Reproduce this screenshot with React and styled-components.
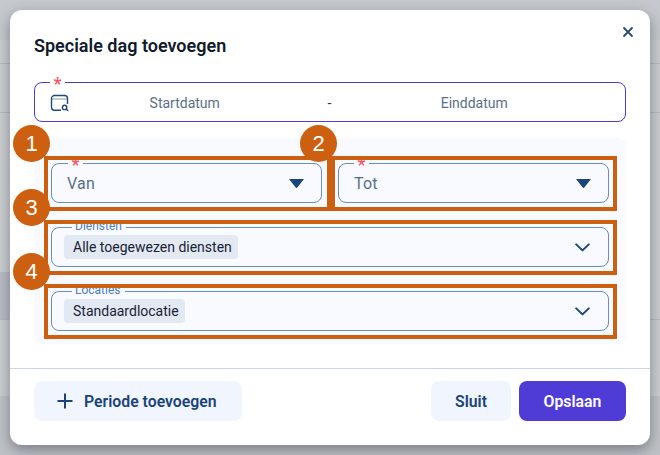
import React from 'react';
import styled, { createGlobalStyle } from 'styled-components';

const GlobalStyle = createGlobalStyle`
  html, body {
    margin: 0;
    padding: 0;
    background: #c6c9cc;
    font-family: Roboto, "Liberation Sans", sans-serif;
  }
`;

const Page = styled.div`
  position: relative;
  width: 660px;
  height: 455px;
  overflow: hidden;
  display: flex;
  flex-direction: column;
  background: #c9cbcf;
`;

const TopBand = styled.div`
  height: 40px;
  background: #c5c8cc;
`;

const BackRow = styled.div`
  height: ${props => props.$height}px;
  border-bottom: ${props => props.$line ? '1px solid #b2bac6' : '0'};
  box-sizing: border-box;
  background: #cbcdd0;
`;

const SelectedCell = styled.div`
  width: 10px;
  height: 100%;
  background: #b9bbc6;
`;

const BottomBand = styled.div`
  flex: 1;
  background: #bfc2c6;
`;

const Overlay = styled.div`
  position: absolute;
  inset: 0;
  padding: 10px;
  box-sizing: border-box;
`;

const Modal = styled.div`
  height: 435px;
  background: #fff;
  border-radius: 12px;
  box-shadow: 0 5px 14px rgba(40, 45, 60, 0.45);
  display: flex;
  flex-direction: column;
  position: relative;
`;

const Header = styled.div`
  height: 72px;
  box-sizing: border-box;
  padding: 25px 24px 0;
`;

const Title = styled.h2`
  margin: 0;
  font-size: 18px;
  line-height: 22px;
  font-weight: 600;
  color: #111b2b;
`;

const CloseButton = styled.button`
  position: absolute;
  top: 16px;
  right: 16px;
  width: 12px;
  height: 12px;
  padding: 0;
  border: 0;
  background: none;
  display: flex;
`;

const Body = styled.div`
  padding: 0 24px;
  display: flex;
  flex-direction: column;
  gap: 16px;
`;

const DateField = styled.div`
  position: relative;
  height: 40px;
  box-sizing: border-box;
  border: 1px solid #4f3bd6;
  border-radius: 8px;
  display: flex;
  align-items: center;
  padding: 1px 33px 0 15px;
  font-size: 14px;
  color: #5a6e8c;
`;

const CalendarSvg = styled.svg`
  flex-shrink: 0;
  margin-right: -2px;
`;

const DateValue = styled.div`
  flex: 1;
  text-align: center;
`;

const Dash = styled.div`
  width: 54px;
  text-align: center;
  color: #2c3a4e;
`;

const Required = styled.span`
  position: absolute;
  top: ${props => props.$top}px;
  left: ${props => props.$left}px;
  width: 15px;
  height: 8px;
  background: ${props => props.$bg};
  color: #ff5064;
  font-size: 18px;
  font-weight: 500;
  line-height: 12px;
  text-align: center;
`;

const Panel = styled.div`
  background: #f8faff;
  border-radius: 8px;
  padding: 25px 17px 13px;
  display: grid;
  grid-template-columns: 1fr 1fr;
  gap: 24px 16px;
`;

const Field = styled.div`
  position: relative;
  grid-column: ${props => props.$wide ? '1 / -1' : 'auto'};
  height: 40px;
  box-sizing: border-box;
  border: 1px solid #5f90c8;
  border-radius: 8px;
  display: flex;
  align-items: center;
  justify-content: space-between;
  padding: 0 ${props => props.$wide ? '18px' : '17px'} 0 ${props => props.$wide ? '12px' : '15px'};
`;

const Value = styled.span`
  font-size: 16px;
  letter-spacing: 0.2px;
  color: #5a6e8c;
`;

const Chip = styled.span`
  height: 24px;
  padding: 0 6px 0 9px;
  border-radius: 4px;
  background: #e3e9f3;
  font-size: 14px;
  line-height: 24px;
  color: #182333;
`;

const FieldLabel = styled.span`
  position: absolute;
  top: -8px;
  left: 20px;
  padding: 0 4px 0 3px;
  background: #f8faff;
  font-size: 12px;
  line-height: 12px;
  color: #4a7fc0;
`;

const Highlight = styled.div`
  position: absolute;
  top: -8px;
  bottom: -9px;
  left: -8px;
  right: ${props => props.$wideRight ? -10 : -9}px;
  border: 4px solid #cd5f10;
  pointer-events: none;
`;

const Footer = styled.div`
  margin-top: 24px;
  border-top: 1px solid #ccd6e6;
  padding: 12px 24px 24px;
  display: flex;
  align-items: center;
  gap: 8px;
`;

const Button = styled.button`
  height: 40px;
  width: ${props => props.$width}px;
  padding: 0;
  border: 0;
  border-radius: 8px;
  background: ${props => props.$primary ? '#4f3bd6' : '#f1f6fe'};
  color: ${props => props.$primary ? '#fff' : '#1b4478'};
  font-family: inherit;
  font-size: 15.8px;
  font-weight: 600;
  display: flex;
  align-items: center;
  justify-content: center;
  gap: 11px;
`;

const AddButton = styled(Button)`
  justify-content: flex-start;
  padding-left: 23px;
`;

const Spacer = styled.div`
  flex: 1;
`;

const Badge = styled.div`
  position: absolute;
  top: ${props => props.$top}px;
  left: ${props => props.$left}px;
  width: 37px;
  height: 37px;
  border-radius: 50%;
  background: #cd5f10;
  color: #fff;
  font-family: "Liberation Sans", sans-serif;
  font-size: 22px;
  line-height: 37px;
  text-align: center;
`;

const CalendarIcon = () => (
  <CalendarSvg width="19" height="19" viewBox="0 0 19 19" fill="none">
    <path d="M4.5 1.5v1M14.5 1.5v1" stroke="#c3ccd9" strokeWidth="1" />
    <path d="M1.5 6h15.5" stroke="#c3ccd9" strokeWidth="2" />
    <path d="M11 17.2H4.5a3 3 0 0 1-3-3V5.5a3 3 0 0 1 3-3h10a3 3 0 0 1 3 3V11" stroke="#1f4a7a" strokeWidth="1.4" />
    <circle cx="14.6" cy="14.4" r="2.2" stroke="#1f4a7a" strokeWidth="1.4" />
    <path d="M16.3 16.1l1.5 1.5" stroke="#1f4a7a" strokeWidth="1.4" strokeLinecap="round" />
  </CalendarSvg>
);

const CloseIcon = () => (
  <svg width="12" height="12" viewBox="0 0 12 12" fill="none">
    <path d="M1.5 1.5l9 9M10.5 1.5l-9 9" stroke="#254b75" strokeWidth="1.8" />
  </svg>
);

const CaretIcon = () => (
  <svg width="15" height="9" viewBox="0 0 15 9">
    <path d="M0 0h15L8.5 8.2a1.2 1.2 0 0 1-2 0z" fill="#1b4478" />
  </svg>
);

const ChevronIcon = () => (
  <svg width="15" height="9" viewBox="0 0 15 9" fill="none">
    <path d="M1.2 1.4l6.3 6 6.3-6" stroke="#1b4478" strokeWidth="2" strokeLinecap="round" strokeLinejoin="round" />
  </svg>
);

const PlusIcon = () => (
  <svg width="16" height="16" viewBox="0 0 16 16" fill="none">
    <path d="M8 .5v15M.5 8h15" stroke="#1b4478" strokeWidth="2" />
  </svg>
);

export default function App() {
  return (
    <Page>
      <GlobalStyle />
      <TopBand />
      <BackRow $height={24} $line />
      <BackRow $height={49} $line />
      <BackRow $height={159} />
      <BackRow $height={48} $line>
        <SelectedCell />
      </BackRow>
      <BackRow $height={76} />
      <BottomBand />

      <Overlay>
        <Modal>
          <CloseButton aria-label="Sluiten">
            <CloseIcon />
          </CloseButton>
          <Header>
            <Title>Speciale dag toevoegen</Title>
          </Header>
          <Body>
            <DateField>
              <Required $top={-5} $left={15} $bg="#fff">*</Required>
              <CalendarIcon />
              <DateValue>Startdatum</DateValue>
              <Dash>-</Dash>
              <DateValue>Einddatum</DateValue>
            </DateField>
            <Panel>
              <Field>
                <Required $top={-5} $left={16} $bg="#f8faff">*</Required>
                <Value>Van</Value>
                <CaretIcon />
                <Highlight $wideRight />
              </Field>
              <Field>
                <Required $top={-5} $left={15} $bg="#f8faff">*</Required>
                <Value>Tot</Value>
                <CaretIcon />
                <Highlight />
              </Field>
              <Field $wide>
                <FieldLabel>Diensten</FieldLabel>
                <Chip>Alle toegewezen diensten</Chip>
                <ChevronIcon />
                <Highlight />
              </Field>
              <Field $wide>
                <FieldLabel>Locaties</FieldLabel>
                <Chip>Standaardlocatie</Chip>
                <ChevronIcon />
                <Highlight />
              </Field>
            </Panel>
          </Body>
          <Footer>
            <AddButton $width={208}>
              <PlusIcon />
              Periode toevoegen
            </AddButton>
            <Spacer />
            <Button $width={80}>Sluit</Button>
            <Button $primary $width={107}>Opslaan</Button>
          </Footer>
        </Modal>
      </Overlay>

      <Badge $top={125} $left={13}>1</Badge>
      <Badge $top={125} $left={300}>2</Badge>
      <Badge $top={189} $left={13}>3</Badge>
      <Badge $top={253} $left={13}>4</Badge>
    </Page>
  );
}
